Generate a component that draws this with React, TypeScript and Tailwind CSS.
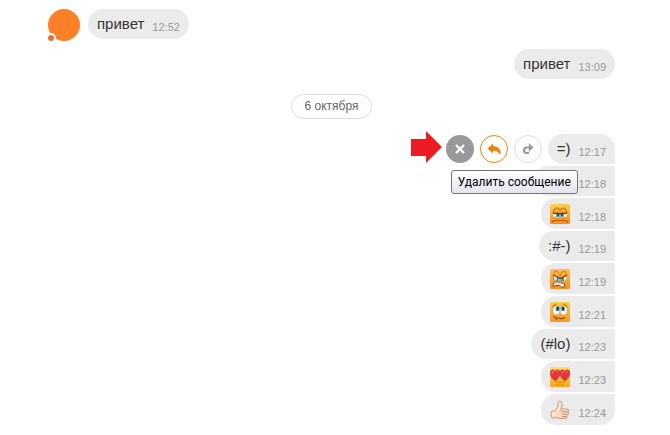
import type { ReactNode } from 'react';
import clsx from 'clsx';

interface Message {
  time: string;
  body: ReactNode;
  emoji?: boolean;
}

function Smile({ children, from, to }: { children: ReactNode; from: string; to: string }) {
  const id = `smile-${from.slice(1)}-${to.slice(1)}`;
  return (
    <svg width="20" height="20" viewBox="0 0 20 20" fill="none" aria-hidden="true">
      <defs>
        <linearGradient id={id} x1="0" y1="0" x2="0" y2="1">
          <stop offset="0" stopColor={from} />
          <stop offset="1" stopColor={to} />
        </linearGradient>
      </defs>
      <rect width="20" height="20" rx="1.5" fill={`url(#${id})`} />
      {children}
    </svg>
  );
}

function GrumpySmile() {
  return (
    <Smile from="#ffd04d" to="#fb8a17">
      <path d="M3 9 4 5.500Q5.500 3.500 8 4l2 2 2-2q2.500-.5 4 1.500L17 9z" fill="#fba82a" stroke="#a8641a" strokeWidth=".9" />
      <path d="M3.500 10h5.500v3.500Q5.500 15 3.500 12zM11 10h5.500v2q-2 3-5.500 1.500z" fill="#fff" />
      <path d="M6 10h2.800v3.200H6zM11.200 10H14v3.200h-2.800z" fill="#2aa0dc" />
      <path d="M7.500 10h1.300v2H7.500zM11.200 10h1.300v2h-1.300z" fill="#123651" />
      <path d="M3 9.500h6l1 .7 1-.7h6" stroke="#6e3e0b" strokeWidth="1.200" />
      <path d="M4 13.500q2.500 1.500 5 .5M11 14q2.500 1 5-.5" stroke="#c77a22" strokeWidth=".8" />
      <path d="M2 18q1.500-1.500 4-1.500h8q2.500 0 4 1.500" stroke="#a65512" strokeWidth="1.200" />
    </Smile>
  );
}

function AngrySmile() {
  return (
    <Smile from="#ffc34b" to="#fa8c1d">
      <path d="m3 6 2-4 3 1 2 5 2-5 3-1 2 4-1 5H4z" fill="#ffb63a" stroke="#b06a1e" strokeWidth=".7" />
      <path d="m4 7 5.500 2.500L9 12q-4 0-5-3zM11 9.500 16.500 7v3q-1.500 2.500-5 2z" fill="#fff" />
      <path d="m6.500 8.500 2.500 1-.5 2.500h-2zM11.500 9.500l2.500-1V12h-2.500z" fill="#2196d6" />
      <path d="m3.500 6 6 3.200L11 9.500 16.500 6" stroke="#65310e" strokeWidth="1.300" />
      <path d="m3.500 14 2-1.200 5 .5 4 1.500v3l-3 .2-2-1.500H6L3 17.500z" fill="#fff" stroke="#7d421b" strokeWidth=".9" />
      <path d="M6 13.500V16M8.500 13.500V16M11 14v2.500M4 15h9" stroke="#b6a59c" strokeWidth=".5" />
    </Smile>
  );
}

function SadSmile() {
  return (
    <Smile from="#ffc849" to="#fd9720">
      <path d="m2.500 4.500 4-2.500M17.500 4.500l-4-2.500" stroke="#a66013" />
      <ellipse cx="6.300" cy="8.500" rx="3.500" ry="4.500" fill="#fff" stroke="#c38a46" strokeWidth=".6" />
      <ellipse cx="13.700" cy="8.500" rx="3.500" ry="4.500" fill="#fff" stroke="#c38a46" strokeWidth=".6" />
      <ellipse cx="7.500" cy="6.800" rx="1.900" ry="2.500" fill="#218cc8" />
      <ellipse cx="13" cy="6.800" rx="1.900" ry="2.500" fill="#218cc8" />
      <path d="M7 5h1.500v3H7zM12.500 5H14v3h-1.500z" fill="#0d2c42" />
      <path d="m3.500 14 2 2q2.500-.7 4 .3t5.500-.8M5.500 16l1.500 2" stroke="#8c4815" strokeWidth="1.100" />
    </Smile>
  );
}

function LoveSmile() {
  return (
    <Smile from="#ffe060" to="#fba51b">
      <path d="M5 14q5 1 10 0 0 4.500-5 4.500T5 14" fill="#e88712" />
      <path d="M5.500 16q4.500 2.500 9 0" stroke="#fbc13b" />
      <path d="M5.200 14Q.3 10 .3 6.500.3 2.800 2.700 2.800 4.500 2.800 5.200 4.800 6 2.800 7.700 2.800 10 2.800 10 6.500 10 10 5.200 14M14.800 14Q10 10 10 6.500 10 2.800 12.300 2.800q1.700 0 2.500 2 .7-2 2.500-2 2.400 0 2.400 3.700 0 3.500-4.900 7.500" fill="#e83243" stroke="#ad2231" strokeWidth=".5" />
      <path d="M2 7q-.3-2.500 1.500-2.500M12 7q-.3-2.500 1.200-2.500M7 5.200l1.200-.5M16.500 5.200l1.200-.5" stroke="#ff9ba1" />
    </Smile>
  );
}

function ThumbUp() {
  return (
    <svg width="20" height="20" viewBox="0 0 20 20" fill="none" aria-hidden="true">
      <path d="M1.500 11.500 5 10.500Q8.500 8 8 3.500q0-2.500 2-2.500 2.300.5 2 4L11.500 9H17q2 0 1.500 2.200 1 1.500-.5 2.800.3 1.500-1 2.500 0 2-2 2h-5l-4-1-4 .5q-1.500-3-.5-6.500" fill="#f9dcc2" stroke="#c99b7c" />
      <path d="M11.500 9q-1.500.5-1.500 2.500M12 11.800h6M12 14.200h5.500M12 16.500h4.500" stroke="#c98d6d" />
      <path d="M3.200 12.500v4M9.700 3.500V7Q9.500 9.500 7 11.500" stroke="#fff4e6" strokeWidth="1.300" />
    </svg>
  );
}

const messages: Message[] = [
  { time: '12:18', body: <span className="block w-7" /> },
  { time: '12:18', body: <GrumpySmile />, emoji: true },
  { time: '12:19', body: ':#-)' },
  { time: '12:19', body: <AngrySmile />, emoji: true },
  { time: '12:21', body: <SadSmile />, emoji: true },
  { time: '12:23', body: '(#lo)' },
  { time: '12:23', body: <LoveSmile />, emoji: true },
  { time: '12:24', body: <ThumbUp />, emoji: true },
];

function Bubble({ time, body, emoji = false, className }: Message & { className: string }) {
  return (
    <div
      className={clsx(
        'flex w-fit items-center gap-2 bg-[#ebebeb] px-[9px]',
        emoji ? 'h-[31px]' : 'h-[30px]',
        className,
      )}
    >
      <div className="text-[15px] leading-5 text-[#333]">{body}</div>
      <time className="pt-1.5 text-[11px] leading-4 text-[#999]">{time}</time>
    </div>
  );
}

function Arrow() {
  return (
    <svg width="31" height="32" viewBox="0 0 31 32" className="mr-1 mb-1" aria-hidden="true">
      <path d="M0 8h15V0l16 16-16 16v-7H0z" fill="#ed1c24" />
    </svg>
  );
}

function MessageActions() {
  return (
    <div className="flex items-center gap-1.5">
      <div className="relative">
        <button
          type="button"
          aria-label="Удалить"
          className="flex size-7 items-center justify-center rounded-full bg-[#999]"
        >
          <svg width="10" height="10" viewBox="0 0 10 10" stroke="#fff" strokeWidth="2.200">
            <path d="m1 1 8 8M9 1 1 9" />
          </svg>
        </button>
        <div
          role="tooltip"
          className="absolute top-[35px] left-[5px] z-10 rounded-[3px] border border-[#767676] bg-linear-to-b from-white to-[#e4e5f0] px-1.5 py-px font-[Roboto,sans-serif] text-[12px] leading-5 whitespace-nowrap text-black"
        >
          Удалить сообщение
        </div>
      </div>
      <button
        type="button"
        aria-label="Ответить"
        className="flex size-7 items-center justify-center rounded-full border border-[#ee8208] bg-white"
      >
        <svg width="14" height="12" viewBox="0 0 14 12" fill="#ee8208">
          <path d="M6 .5v2.700q6.500 0 7.500 5.300v2.500h-1.500Q11.500 7.800 6 7.800v2.700L.5 5.500z" />
        </svg>
      </button>
      <button
        type="button"
        aria-label="Переслать"
        className="flex size-7 items-center justify-center rounded-full border border-[#ddd] bg-white"
      >
        <svg width="12" height="12" viewBox="0 0 12 12" fill="none">
          <path d="M7.500 4.500H4.800Q2 4.500 2 7.200T4.800 10H7" stroke="#999" strokeWidth="2.200" />
          <path d="m6.800 0 4.700 4.500L6.800 9z" fill="#999" />
        </svg>
      </button>
    </div>
  );
}

export default function App() {
  return (
    <main className="flex flex-col bg-white pt-[9px] pr-[55px] pb-[9px] pl-12 font-['Liberation_Sans',Arial,sans-serif]">
      <div className="flex items-start gap-2">
        <div className="relative size-8 rounded-full bg-[#ff8026]">
          <span className="absolute bottom-0 left-0 size-1.5 rounded-full bg-[#ee7037] ring-2 ring-white" />
        </div>
        <Bubble time="12:52" body="привет" className="rounded-[15px]" />
      </div>
      <div className="mt-2 flex justify-end">
        <Bubble time="13:09" body="привет" className="rounded-[15px]" />
      </div>
      <div className="mt-[15px] self-center rounded-full border border-[#ddd] px-[13px] text-[12px] leading-[23px] text-[#666]">
        6 октября
      </div>
      <section className="mt-[15px] flex flex-col items-end gap-0.5">
        <div className="flex h-[30px] items-center gap-1.5">
          <div className="flex items-center">
            <Arrow />
            <MessageActions />
          </div>
          <Bubble time="12:17" body="=)" className="rounded-[15px] rounded-br-[2px]" />
        </div>
        {messages.map((message, i) => (
          <Bubble
            key={i}
            {...message}
            className={clsx(
              'rounded-l-[15px] rounded-tr-[2px]',
              i === messages.length - 1 ? 'rounded-br-[15px]' : 'rounded-br-[2px]',
            )}
          />
        ))}
      </section>
    </main>
  );
}
